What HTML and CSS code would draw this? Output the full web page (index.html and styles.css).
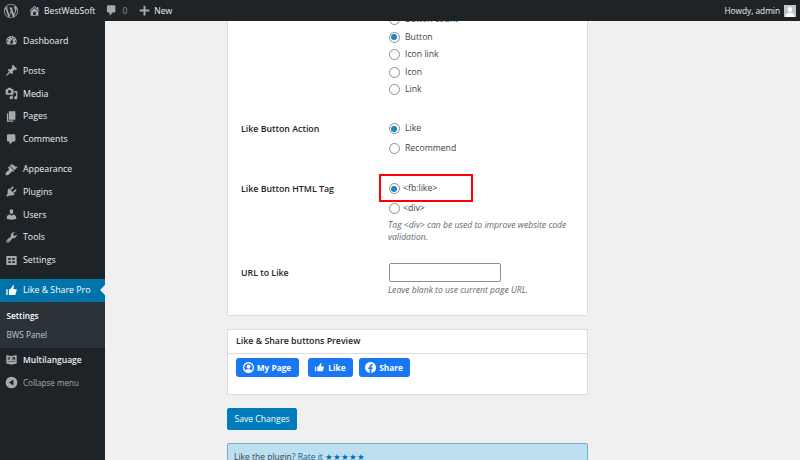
FILE: index.html
```html
<!DOCTYPE html>
<html lang="en">
<head>
<meta charset="utf-8">
<title>Like &amp; Share Pro</title>
<link rel="stylesheet" href="styles.css">
</head>
<body>
<header class="adminbar">
  <svg class="ab-logo" viewBox="0 0 20 20"><path d="M20 10c0-5.51-4.49-10-10-10C4.48 0 0 4.49 0 10c0 5.52 4.48 10 10 10 5.51 0 10-4.48 10-10zM7.78 15.37L4.37 6.22c.55-.02 1.17-.08 1.17-.08.5-.06.44-1.13-.06-1.11 0 0-1.45.11-2.37.11-.18 0-.37 0-.58-.01C4.12 2.69 6.87 1.11 10 1.11c2.33 0 4.45.87 6.05 2.34-.68-.11-1.65.39-1.65 1.58 0 .74.45 1.36.9 2.1.35.61.55 1.36.55 2.46 0 1.49-1.4 5-1.4 5l-3.03-8.37c.54-.02.82-.17.82-.17.5-.05.44-1.25-.06-1.22 0 0-1.44.12-2.38.12-.87 0-2.33-.12-2.33-.12-.5-.03-.56 1.2-.06 1.22l.92.08 1.26 3.41zM17.41 10c.24-.64.74-1.87.43-4.25.7 1.29 1.05 2.71 1.05 4.25 0 3.29-1.73 6.24-4.4 7.78.97-2.59 1.94-5.2 2.92-7.78zM6.1 18.09C3.12 16.65 1.11 13.53 1.11 10c0-1.3.23-2.48.72-3.59C3.25 10.3 4.67 14.2 6.1 18.09zm4.03-6.63l2.58 6.98c-.86.29-1.76.45-2.71.45-.79 0-1.57-.11-2.29-.33.81-2.38 1.62-4.74 2.42-7.1z"/></svg>
  <svg class="ab-home" viewBox="0 0 20 20"><path fill-rule="evenodd" d="M16 8.5l1.53 1.53-1.06 1.06L10 4.62l-6.47 6.47-1.06-1.06L10 2.5l4 4v-2h2v4zm-6-2.46l6 5.99V18H4v-5.97zM12 17v-5H8v5h4z"/></svg>
  <span class="ab-site">BestWebSoft</span>
  <svg class="ab-comment" viewBox="0 0 20 20"><path d="M5 2h9c1.1 0 2 .9 2 2v7c0 1.1-.9 2-2 2h-2l-5 5v-5H5c-1.1 0-2-.9-2-2V4c0-1.1.9-2 2-2z"/></svg>
  <span class="ab-count">0</span>
  <svg class="ab-plus" viewBox="0 0 20 20"><path d="M17.5 8.5v3h-6v6h-3v-6h-6v-3h6v-6h3v6z"/></svg>
  <span class="ab-new">New</span>
  <span class="ab-howdy">Howdy, admin</span>
  <span class="avatar"><svg viewBox="0 0 12 12"><path d="M6 2c1.4 0 2.2 1.1 2.2 2.6S7.3 7.4 6 7.4 3.8 6.100 3.800 4.600 4.600 2 6 2zM1.500 12c0-2.500 1.500-4 3-4.300.5.300 2.500.300 3 0 1.500.3 3 1.800 3 4.300z"/></svg></span>
</header>
<div class="shell">
  <nav class="sidebar">
    <a class="item"><svg viewBox="0 0 20 20"><path fill-rule="evenodd" d="M3.760 16h12.480c1.100-1.370 1.760-3.110 1.760-5 0-4.420-3.580-8-8-8s-8 3.580-8 8c0 1.890.66 3.630 1.760 5zM10 4c.55 0 1 .45 1 1s-.45 1-1 1-1-.45-1-1 .45-1 1-1zM6 6c.55 0 1 .45 1 1s-.45 1-1 1-1-.45-1-1 .45-1 1-1zm8 0c.55 0 1 .45 1 1s-.45 1-1 1-1-.45-1-1 .45-1 1-1zm-5.370 5.550L12 7v6c0 1.100-.9 2-2 2s-2-.9-2-2c0-.57.24-1.080.63-1.450zM4 10c.55 0 1 .45 1 1s-.45 1-1 1-1-.45-1-1 .45-1 1-1zm12 0c.55 0 1 .45 1 1s-.45 1-1 1-1-.45-1-1 .45-1 1-1z"/></svg>Dashboard</a>
    <div class="sep"></div>
    <a class="item"><svg viewBox="0 0 20 20"><path d="M10.440 3.020l1.820-1.820 6.360 6.350-1.830 1.820c-1.050-.68-2.480-.57-3.410.36l-.75.75c-.92.93-1.040 2.350-.35 3.410l-1.830 1.820-2.410-2.410-2.800 2.790c-.42.42-3.380 2.710-3.800 2.290s1.860-3.390 2.280-3.810l2.790-2.790L4.100 9.360l1.830-1.820c1.050.69 2.480.57 3.400-.36l.75-.75c.93-.92 1.050-2.350.36-3.410z"/></svg>Posts</a>
    <a class="item"><svg viewBox="0 0 20 20"><path fill-rule="evenodd" d="M13 11V4c0-.55-.45-1-1-1h-1.670L9 1H5L3.670 3H2c-.55 0-1 .45-1 1v7c0 .55.45 1 1 1h10c.55 0 1-.45 1-1zM7 4.500c1.380 0 2.500 1.120 2.500 2.500S8.380 9.500 7 9.500 4.500 8.380 4.500 7 5.620 4.500 7 4.500zM14 6h5v10.500c0 1.380-1.120 2.500-2.500 2.500S14 17.880 14 16.500s1.120-2.500 2.500-2.500c.17 0 .34.02.5.05V9h-3V6zm-4 8.050V13h2v3.500c0 1.380-1.120 2.500-2.500 2.500S7 17.880 7 16.500 8.120 14 9.500 14c.17 0 .34.02.5.05z"/></svg>Media</a>
    <a class="item"><svg viewBox="0 0 20 20"><path d="M6 15V2h10v13H6zm-1 1h8v2H3V5h2v11z"/></svg>Pages</a>
    <a class="item"><svg viewBox="0 0 20 20"><path d="M5 2h9c1.100 0 2 .9 2 2v7c0 1.100-.9 2-2 2h-2l-5 5v-5H5c-1.100 0-2-.9-2-2V4c0-1.100.9-2 2-2z"/></svg>Comments</a>
    <div class="sep"></div>
    <a class="item"><svg viewBox="0 0 20 20"><path d="M14.480 11.060L7.410 3.990l1.500-1.500c.5-.56 2.300-.47 3.510.32 1.210.8 1.430 1.280 2.910 2.100 1.180.64 2.450 1.260 4.450.85zm-.71.71L6.700 4.700 4.930 6.470c-.39.39-.39 1.020 0 1.410l1.060 1.060c.39.39.39 1.030 0 1.420-.6.6-2.200 2-3.200 3.200C1.700 13.900.4 16.200 1 17.900c.6.9 1.200 1.300 2.100 1.100 1.800-.5 4-2.400 5-3.400.8-.8 1.500-2.100 2.200-2.600.39-.39 1.030-.39 1.420 0l.27.27c.39.39 1.020.39 1.410 0z"/></svg>Appearance</a>
    <a class="item"><svg viewBox="0 0 20 20"><path d="M13.110 4.360L9.870 7.600 8 5.730l3.240-3.240c.35-.34 1.050-.2 1.560.32.52.51.66 1.210.31 1.550zm-8 1.770l.91-1.120 9.010 9.010-1.190.84c-.71.71-2.630 1.160-3.820 1.160H6.140L4.900 17.260c-.59.59-1.540.59-2.120 0-.59-.58-.59-1.530 0-2.120l1.240-1.240v-3.880c0-1.130.4-3.190 1.090-3.890zm7.260 3.970l3.240-3.240c.34-.35 1.040-.21 1.550.31.52.51.66 1.210.31 1.550l-3.240 3.250z"/></svg>Plugins</a>
    <a class="item"><svg viewBox="0 0 20 20"><path d="M10 9.250c-2.270 0-2.730-3.440-2.730-3.440C7 4.020 7.820 2 9.970 2c2.160 0 2.980 2.020 2.710 3.810 0 0-.41 3.440-2.680 3.440zm0 2.570L12.720 10c2.390 0 4.520 2.330 4.520 4.530v2.490s-3.650 1.130-7.240 1.130c-3.650 0-7.240-1.130-7.240-1.130v-2.490c0-2.250 1.940-4.480 4.470-4.480z"/></svg>Users</a>
    <a class="item"><svg viewBox="0 0 20 20"><path fill-rule="evenodd" d="M16.680 9.770c-1.340 1.340-3.300 1.670-4.950.99l-5.410 6.520c-.99.99-2.590.99-3.580 0s-.99-2.590 0-3.570l6.520-5.420c-.68-1.650-.35-3.610.99-4.950 1.280-1.280 3.120-1.620 4.720-1.060l-2.890 2.890 2.820 2.820 2.860-2.870c.53 1.580.18 3.390-1.080 4.650zM3.810 16.210c.4.39 1.040.39 1.430 0 .4-.4.4-1.040 0-1.430-.39-.4-1.030-.4-1.430 0-.39.39-.39 1.030 0 1.430z"/></svg>Tools</a>
    <a class="item"><svg viewBox="0 0 20 20"><path fill-rule="evenodd" d="M18 16V4c0-.55-.45-1-1-1H3c-.55 0-1 .45-1 1v12c0 .55.45 1 1 1h14c.55 0 1-.45 1-1zM9 11v3H5v-3zm6-5v3h-4V6zm-6 0v3H5V6zm6 5v3h-4v-3z"/></svg>Settings</a>
    <div class="sep"></div>
    <a class="item active"><svg viewBox="0 0 20 20"><path d="M12.720 2c.15-.02.26.02.41.07.56.19.83.79.66 1.350-.17.55-1 3.040-1 3.580 0 .53.75 1 1.350 1h3c.6 0 1 .4 1 1s-2 7-2 7c-.17.39-.55 1-1 1H6V8h2.140c.41-.41 3.300-4.710 3.580-5.270.21-.41.6-.68 1-.73zM2 8h2v9H2V8z"/></svg>Like &amp; Share Pro</a>
    <div class="submenu">
      <a class="sub current">Settings</a>
      <a class="sub">BWS Panel</a>
    </div>
    <a class="item strong"><svg viewBox="0 0 20 20"><path fill-rule="evenodd" d="M2 3l7 1.500 1 .5 1-.5L18 3v13l-7 1.500-1 .5-1-.5L2 16zM4 6v1h1.500v.8L4 10l.8.600L6 8.800l1.200 1.800.8-.6-1.500-2.200V7H8V6zm8 0l-1 5h1l.3-1.500h2.400L15 11h1l-1-5zm.5 2.500l.5-1.600.5 1.600zM4 12.500v1h12v-1z"/></svg>Multilanguage</a>
    <a class="item collapse"><svg viewBox="0 0 20 20"><path fill-rule="evenodd" d="M10 1a9 9 0 1 1 0 18 9 9 0 0 1 0-18zm3 4.500L6 10l7 4.500z"/></svg>Collapse menu</a>
  </nav>
  <main class="main">
    <section class="card">
      <div class="form-row">
        <div class="row-label"></div>
        <div class="options tight">
          <label class="opt"><input type="radio" name="layout">Button count</label>
          <label class="opt"><input type="radio" name="layout" checked>Button</label>
          <label class="opt"><input type="radio" name="layout">Icon link</label>
          <label class="opt"><input type="radio" name="layout">Icon</label>
          <label class="opt"><input type="radio" name="layout">Link</label>
        </div>
      </div>
      <div class="form-row">
        <div class="row-label">Like Button Action</div>
        <div class="options">
          <label class="opt"><input type="radio" name="action" checked>Like</label>
          <label class="opt"><input type="radio" name="action">Recommend</label>
        </div>
      </div>
      <div class="form-row">
        <div class="row-label">Like Button HTML Tag</div>
        <div class="options tag">
          <label class="opt"><input type="radio" name="tag" checked>&lt;fb:like&gt;</label>
          <label class="opt"><input type="radio" name="tag">&lt;div&gt;</label>
          <p class="desc">Tag &lt;div&gt; can be used to improve website code validation.</p>
          <span class="highlight"></span>
        </div>
      </div>
      <div class="form-row url-row">
        <div class="row-label">URL to Like</div>
        <div class="options">
          <input class="url" type="text">
          <p class="desc">Leave blank to use current page URL.</p>
        </div>
      </div>
    </section>
    <section class="preview">
      <h3 class="preview-title">Like &amp; Share buttons Preview</h3>
      <div class="preview-body">
        <a class="fb-btn page"><svg viewBox="0 0 16 16"><path fill-rule="evenodd" d="M8 0a8 8 0 1 1 0 16A8 8 0 0 1 8 0zm0 1.800a6.200 6.200 0 0 0-4.600 10.400c.9-1.200 2.200-1.700 4.600-1.700s3.700.5 4.600 1.700A6.200 6.200 0 0 0 8 1.800zM8 3.700a3 3 0 1 1 0 6 3 3 0 0 1 0-6z"/></svg>My Page</a>
        <a class="fb-btn like"><svg viewBox="0 0 20 20"><path d="M12.720 2c.15-.02.26.02.41.07.56.19.83.79.66 1.350-.17.55-1 3.040-1 3.580 0 .53.75 1 1.350 1h3c.6 0 1 .4 1 1s-2 7-2 7c-.17.39-.55 1-1 1H6V8h2.140c.41-.41 3.300-4.710 3.580-5.270.21-.41.6-.68 1-.73zM2 8h2v9H2V8z"/></svg>Like</a>
        <a class="fb-btn share"><svg viewBox="0 0 16 16"><path d="M16 8a8 8 0 1 0-9.250 7.900v-5.590H4.720V8h2.030V6.240c0-2 1.190-3.110 3.020-3.110.87 0 1.790.16 1.790.16v1.970h-1.010c-.99 0-1.300.62-1.300 1.250V8h2.220l-.36 2.310H9.250v5.590A8 8 0 0 0 16 8z"/></svg>Share</a>
      </div>
    </section>
    <button class="save" type="button">Save Changes</button>
    <div class="notice">Like the plugin? <a class="rate">Rate it <span class="stars">★★★★★</span></a></div>
  </main>
</div>
</body>
</html>
```
FILE: styles.css
```css
* { box-sizing: border-box; }
html, body { margin: 0; height: 100%; overflow: hidden; }
body {
  width: 800px;
  height: 460px;
  display: flex;
  flex-direction: column;
  background: #f0f0f1;
  color: #3c434a;
  font-family: "Open Sans", "Noto Sans", sans-serif;
  font-size: 8.8px;
}
.adminbar {
  height: 21px;
  flex: none;
  display: flex;
  align-items: center;
  background: #1d2327;
  color: #f0f0f1;
  fill: #a7aaad;
  padding-left: 3.5px;
  font-size: 8.6px;
}
.adminbar svg { display: block; flex: none; }
.ab-logo { width: 14px; height: 14px; }
.ab-home { width: 13px; height: 13px; margin-left: 10px; }
.ab-site { margin-left: 3.5px; }
.ab-comment { width: 13px; height: 13px; margin-left: 10px; }
.ab-count { margin-left: 4px; color: #8c8f94; }
.ab-plus { width: 13px; height: 13px; margin-left: 10.5px; }
.ab-new { margin-left: 3.5px; }
.ab-howdy { margin-left: auto; margin-right: 4px; font-size: 8.3px; }
.avatar {
  width: 12px;
  height: 12px;
  margin-right: 4px;
  background: #c3c4c7;
  fill: #fff;
}
.shell { flex: 1; display: flex; min-height: 0; }
.sidebar {
  width: 105px;
  flex: none;
  background: #1d2327;
  padding-top: 8.5px;
  color: #f0f0f1;
  fill: #a7aaad;
}
.sep { height: 7.25px; }
.item {
  position: relative;
  display: flex;
  align-items: center;
  height: 22.75px;
  padding-left: 5px;
}
.item svg { width: 13px; height: 13px; margin-right: 5px; flex: none; }
.item.active { background: #0073aa; color: #fff; fill: #fff; }
.item.active::after {
  content: "";
  position: absolute;
  right: 0;
  top: 50%;
  margin-top: -5px;
  border: 5px solid transparent;
  border-left-width: 0;
  border-right-color: #f0f0f1;
}
.item.strong { font-weight: 600; font-size: 8.5px; }
.item.collapse { color: #a7aaad; font-size: 8.1px; }
.submenu {
  background: #2c3338;
  height: 46.75px;
  padding-top: 4.5px;
}
.sub {
  display: flex;
  align-items: center;
  height: 19px;
  padding-left: 6.5px;
  font-size: 8.2px;
  color: #c3c4c7;
}
.sub.current { color: #fff; font-weight: 600; font-size: 8.3px; }
.main {
  flex: 1;
  min-width: 0;
  overflow: hidden;
  padding-left: 122px;
  padding-right: 212px;
}
.card {
  margin-top: -40px;
  padding: 0 13px 19px;
  background: #fff;
  border: 1px solid #dcdcde;
  border-radius: 2px;
}
.form-row { display: flex; margin-top: 20px; }
.form-row:first-child { margin-top: 29px; }
.url-row { margin-top: 19.5px; }
.row-label {
  width: 147px;
  flex: none;
  line-height: 21px;
  font-weight: 600;
  color: #1d2327;
}
.options { position: relative; flex: 1; min-width: 0; }
.opt {
  display: flex;
  align-items: center;
  height: 20px;
  font-size: 8.7px;
  line-height: 21px;
}
.tight .opt { height: 17.5px; }
.opt input {
  appearance: none;
  position: relative;
  width: 11px;
  height: 11px;
  margin: 0 5.5px 0 .5px;
  flex: none;
  border: 1px solid #8c8f94;
  border-radius: 50%;
  background: #fff;
}
.tag .opt input { margin-right: 3.5px; }
.opt input:checked::before {
  content: "";
  position: absolute;
  left: 1.5px;
  top: 1.5px;
  width: 6px;
  height: 6px;
  border-radius: 50%;
  background: #1a86c6;
}
.desc {
  margin: 0;
  font-size: 8.6px;
  font-style: italic;
  line-height: 12.3px;
  color: #646970;
}
.highlight {
  position: absolute;
  left: -9px;
  top: -5px;
  width: 94px;
  height: 28px;
  border: 2px solid #ff0000;
}
.url {
  display: block;
  width: 112px;
  height: 19px;
  margin: 0 0 0 1px;
  background: #fff;
  border: 1px solid #8c8f94;
  border-radius: 2px;
}
.url + .desc { margin-top: 2px; }
.preview {
  margin-top: 13.5px;
  height: 66px;
  background: #fff;
  border: 1px solid #dcdcde;
}
.preview-title {
  margin: 0;
  height: 24px;
  padding-left: 8px;
  border-bottom: 1px solid #dcdcde;
  font-size: 8.8px;
  font-weight: 600;
  line-height: 23px;
  color: #1d2327;
}
.preview-body { display: flex; padding: 4px 0 0 7.5px; }
.fb-btn {
  display: flex;
  align-items: center;
  justify-content: center;
  height: 18.5px;
  gap: 3px;
  background: #1877f2;
  border-radius: 3px;
  color: #fff;
  fill: #fff;
  font-size: 8.3px;
  font-weight: 700;
}
.fb-btn svg { width: 11px; height: 11px; }
.page { width: 63px; margin-right: 9px; }
.like { width: 45px; margin-right: 6px; }
.share { width: 51px; }
.save {
  display: block;
  width: 70px;
  height: 22px;
  margin-top: 13px;
  padding: 0;
  background: #007cba;
  border: 1px solid #007cba;
  border-radius: 2px;
  color: #fff;
  font: inherit;
  font-size: 8.6px;
}
.notice {
  height: 40px;
  margin-top: 13px;
  padding: 6px 6px;
  background: #bde0f0;
  border: 1px solid #72aecc;
  border-radius: 2px;
  line-height: 13px;
  font-size: 8.5px;
}
.rate { color: #135e96; }
.stars { font-family: "DejaVu Sans", sans-serif; font-size: 8.6px; color: #0073aa; letter-spacing: .3px; }
```
